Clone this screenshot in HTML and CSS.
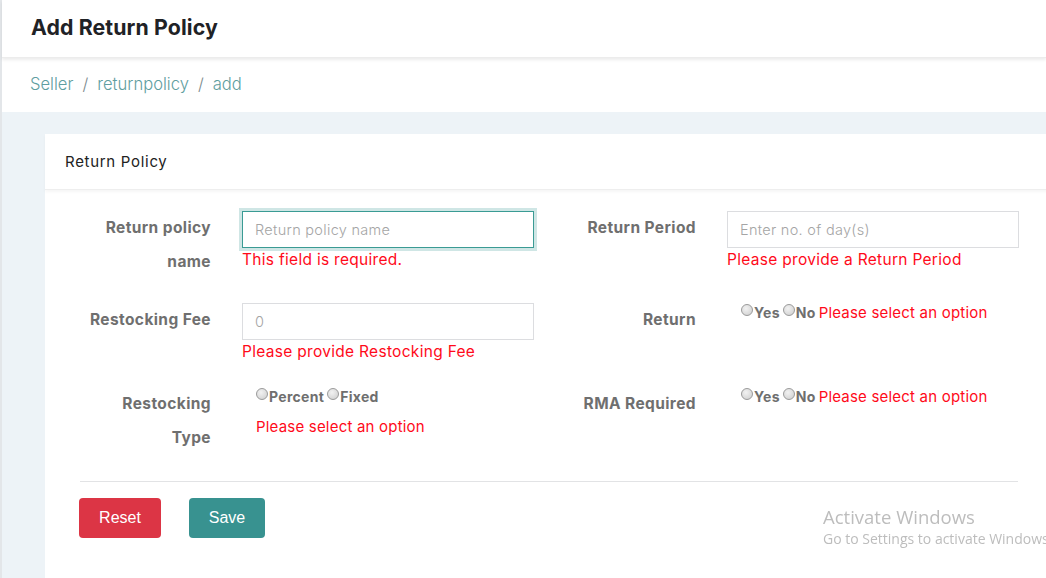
FILE: index.html
```html
<!DOCTYPE html>
<html lang="en">
<head>
<meta charset="utf-8">
<title>Add Return Policy</title>
<link rel="stylesheet" href="styles.css">
</head>
<body>
<div class="page">
  <header class="topbar"><h1 class="title">Add Return Policy</h1></header>
  <nav class="crumbs">
    <a class="crumb">Seller</a><span class="sep">/</span><a class="crumb">returnpolicy</a><span class="sep">/</span><a class="crumb">add</a>
  </nav>
  <main class="content">
    <section class="card">
      <div class="card-head">Return Policy</div>
      <form class="card-body">
        <div class="fields">
          <div class="field">
            <label class="lbl">Return policy name</label>
            <div class="ctl">
              <input class="inp inp-focus" placeholder="Return policy name">
              <div class="err">This field is required.</div>
            </div>
          </div>
          <div class="field">
            <label class="lbl">Return Period</label>
            <div class="ctl">
              <input class="inp" placeholder="Enter no. of day(s)">
              <div class="err">Please provide a Return Period</div>
            </div>
          </div>
          <div class="field">
            <label class="lbl">Restocking Fee</label>
            <div class="ctl">
              <input class="inp" placeholder="0">
              <div class="err">Please provide Restocking Fee</div>
            </div>
          </div>
          <div class="field">
            <label class="lbl">Return</label>
            <div class="ctl radios-block">
              <div class="radios">
                <span class="opt"><span class="radio"></span>Yes</span>
                <span class="opt"><span class="radio"></span>No</span>
                <span class="err-inline">Please select an option</span>
              </div>
            </div>
          </div>
          <div class="field">
            <label class="lbl">Restocking Type</label>
            <div class="ctl radios-block">
              <div class="radios">
                <span class="opt"><span class="radio"></span>Percent</span>
                <span class="opt"><span class="radio"></span>Fixed</span>
              </div>
              <div class="err-small">Please select an option</div>
            </div>
          </div>
          <div class="field">
            <label class="lbl">RMA Required</label>
            <div class="ctl radios-block">
              <div class="radios">
                <span class="opt"><span class="radio"></span>Yes</span>
                <span class="opt"><span class="radio"></span>No</span>
                <span class="err-inline">Please select an option</span>
              </div>
            </div>
          </div>
        </div>
        <hr class="divider">
        <div class="actions">
          <button type="button" class="btn btn-reset">Reset</button>
          <button type="button" class="btn btn-save">Save</button>
        </div>
      </form>
    </section>
  </main>
  <div class="watermark">
    <div class="wm-title">Activate Windows</div>
    <div class="wm-sub">Go to Settings to activate Windows.</div>
  </div>
</div>
</body>
</html>
```

FILE: styles.css
```css
* { box-sizing: border-box; }
html, body { margin: 0; padding: 0; }
body {
  font-family: "Inter", "Open Sans", sans-serif;
  background: #edf3f7;
  overflow: hidden;
  width: 1046px;
  height: 578px;
}
.page {
  border-left: 2px solid #e3e6e9;
  min-height: 578px;
  background: #edf3f7;
}
.topbar {
  background: #fff;
  height: 58px;
  padding-left: 29px;
  display: flex;
  align-items: center;
  box-shadow: 0 2px 3px rgba(0,0,0,0.08);
  position: relative;
  z-index: 1;
  border-bottom: 1px solid #ececec;
}
.title {
  margin: 0;
  font-size: 21.3px;
  font-weight: 700;
  color: #1f2226;
  letter-spacing: 0.1px;
  position: relative;
  top: -2px;
}
.crumbs {
  background: #fff;
  height: 54px;
  padding-left: 28px;
  padding-bottom: 2px;
  display: flex;
  align-items: center;
  font-size: 16.6px;
  font-weight: 300;
}
.crumb { color: #5f9ea0; }
.sep { color: #7b8a8c; margin: 0 9px; }
.content {
  padding: 22px 0 0 43px;
}
.card {
  background: #fff;
  width: 1010px;
  min-height: 460px;
}
.card-head {
  height: 56px;
  padding-left: 20px;
  display: flex;
  align-items: center;
  font-size: 15px;
  letter-spacing: 0.7px;
  color: #222;
  border-bottom: 1px solid #eeeeee;
  box-shadow: 0 2px 3px rgba(0,0,0,0.04);
}
.card-body {
  padding: 20px 37px 30px 35px;
}
.fields {
  display: grid;
  grid-template-columns: 454px 454px;
  column-gap: 31px;
  row-gap: 23px;
  align-items: start;
}
.field {
  display: grid;
  grid-template-columns: 131px 292px;
  column-gap: 31px;
  align-items: start;
}
.lbl {
  text-align: right;
  font-weight: 700;
  font-size: 15.5px;
  letter-spacing: 0.4px;
  line-height: 34px;
  padding-left: 3px;
  padding-top: 1px;
  color: #6f6f6f;
}
.inp {
  display: block;
  width: 292px;
  height: 37px;
  margin-top: 1px;
  border: 1px solid #dcdde0;
  padding: 0 12px;
  font-family: inherit;
  font-size: 14.5px;
  letter-spacing: 0.3px;
  color: #555;
  background: #fff;
  outline: none;
}
.inp::placeholder { color: #a5a5a5; font-weight: 300; }
.inp-focus {
  border-color: #3a9b94;
  box-shadow: 0 0 0 3px #cfe6e5;
}
.err {
  color: #ff0a1a;
  font-size: 15.5px;
  letter-spacing: 0.3px;
  line-height: 22px;
  margin-top: 1px;
  white-space: nowrap;
}
.radios-block { padding-left: 14px; padding-top: 1px; }
.radios {
  display: flex;
  align-items: center;
  line-height: 20px;
  font-size: 14px;
  letter-spacing: 0.3px;
  font-weight: 700;
  color: #6f6f6f;
  white-space: nowrap;
}
.opt {
  display: inline-flex;
  align-items: flex-start;
  margin-right: 3px;
}
.radio {
  width: 12px;
  height: 12px;
  border-radius: 50%;
  border: 1px solid #9a9a9a;
  background: radial-gradient(circle at 40% 35%, #f2f2f2 0%, #d4d4d4 80%);
  margin-top: 1px;
  margin-right: 1px;
}
.err-inline {
  color: #ff0a1a;
  font-size: 15px;
  letter-spacing: 0.2px;
  font-weight: 400;
}
.err-small {
  color: #ff0a1a;
  font-size: 15px;
  letter-spacing: 0.2px;
  line-height: 20px;
  margin-top: 10px;
}
.divider {
  border: 0;
  border-top: 1px solid #e2e3e5;
  margin: 26px 0 16px 0;
  width: 938px;
}
.actions {
  display: flex;
  gap: 28px;
  margin-left: -1px;
}
.btn {
  height: 40px;
  border: 0;
  border-radius: 4px;
  color: #fff;
  font-family: "Liberation Sans", Arial, sans-serif;
  font-size: 16px;
  padding: 0;
}
.btn-reset { background: #dc3545; width: 82px; }
.btn-save { background: #389290; width: 76px; }
.watermark {
  position: fixed;
  left: 823px;
  top: 505px;
  color: #bdbdbd;
  font-family: "Open Sans", "Noto Sans", sans-serif;
  white-space: nowrap;
}
.wm-title { font-size: 18.5px; line-height: 24px; }
.wm-sub { font-size: 14px; line-height: 20px; }
```
